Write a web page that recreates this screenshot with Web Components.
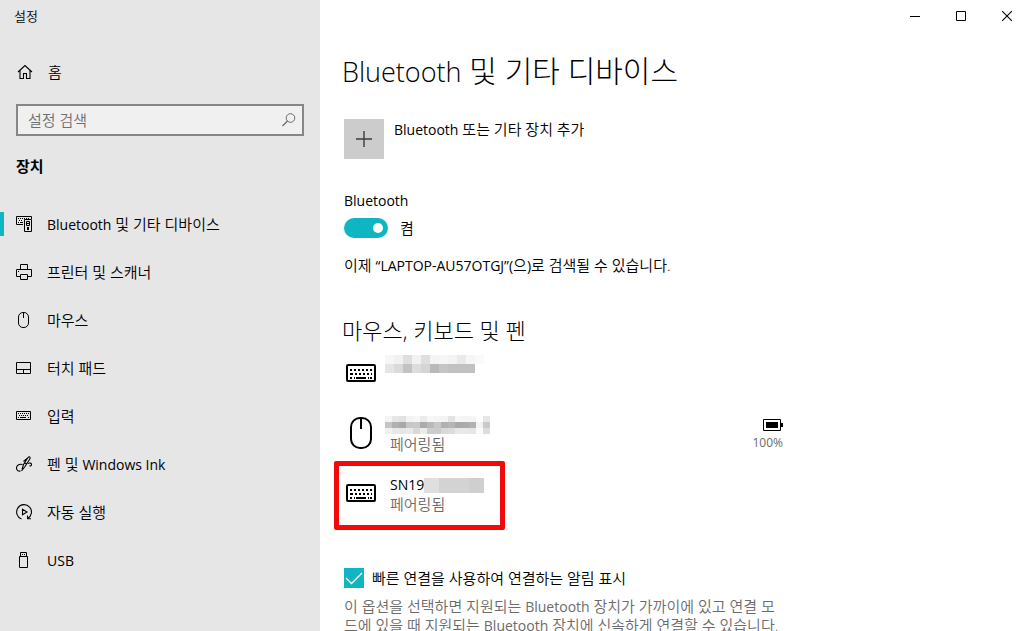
<!DOCTYPE html>
<html lang="ko">
<head>
<meta charset="utf-8">
<title>설정</title>
<style>
  body {
    margin: 0;
    overflow: hidden;
    background: #fff;
    color: #000;
    font: 350 15px/20px "Open Sans", "Noto Sans CJK KR", sans-serif;
    --accent: #0fb5c3;
    --muted: #6b6b6b;
    --latin: 14px;
  }
</style>
</head>
<body>
<settings-app></settings-app>

<script>
const define = (name, html, setup, observed = []) => {
  const template = document.createElement('template');
  template.innerHTML = html;
  customElements.define(name, class extends HTMLElement {
    static observedAttributes = observed;
    constructor() {
      super();
      this.attachShadow({ mode: 'open' }).append(template.content.cloneNode(true));
    }
    connectedCallback() {
      if (setup) setup(this, this.shadowRoot);
    }
    attributeChangedCallback() {
      if (setup) setup(this, this.shadowRoot);
    }
  });
};

const keys = (rows) => rows.map(([y, xs]) => xs.map(([x, w]) => `<rect x="${x}" y="${y}" width="${w}" height="2"/>`).join('')).join('');

const ICONS = {
  home: ['0 0 16 16', '<path d="M1 8 8 1.5 15 8M3 6.5V14.5H6.5V9.5H9.5V14.5H13V6.5" fill="none" stroke="currentColor" stroke-width="1.1"/>'],
  devices: ['0 0 16 16', '<path d="M7 8.5H.5V.5H15.5V3M8.5 3.5H15.5V15.5H8.5ZM10.5 5.5H13.5V9.5H10.5Z" fill="none" stroke="currentColor"/><path d="M2 2h1v1H2zM4 2h1v1H4zM6 2h1v1H6zM8 2h1v1H8zM10 2h1v1h-1zM12 2h1v1h-1zM3 4h1v1H3zM5 4h1v1H5zM2 6h1v1H2zM4 6h3v1H4zM11 7h2v1h-2zM11 11h2v3h-2z"/>'],
  printer: ['0 0 16 16', '<path d="M4.5 5.5V.5H11.5V5.5M4.5 12.5H.5V5.5H15.5V12.5H11.5M4.5 10.5H11.5V15.5H4.5Z" fill="none" stroke="currentColor"/><path d="M2 7h1v1H2z"/>'],
  mouse: ['0 0 16 16', '<rect x="2.5" y=".5" width="10" height="15" rx="4.5" fill="none" stroke="currentColor"/><path d="M7.5 1V6" stroke="currentColor"/>'],
  touchpad: ['0 0 16 16', '<path d="M.5 2.5H14.5V13.5H.5ZM.5 9.5H14.5M7.5 9.5V13.5" fill="none" stroke="currentColor"/>'],
  typing: ['0 0 16 16', '<path d="M.5 3.5H14.5V11.5H.5Z" fill="none" stroke="currentColor"/><path d="M2 5h1v1H2zM4 5h1v1H4zM6 5h1v1H6zM8 5h1v1H8zM10 5h1v1h-1zM12 5h1v1h-1zM3 7h1v1H3zM5 7h1v1H5zM7 7h1v1H7zM9 7h1v1H9zM11 7h1v1h-1zM2 9h1v1H2zM4 9h6v1H4zM12 9h1v1h-1z"/>'],
  ink: ['0 0 16 16', '<path d="M6 13.5 7.5 8.5 12 1.5Q13.5 0 14 1.5 14.300 2.500 13.500 3.500L9 10.500 5.500 15M9 7 10.500 8M11 2.500 7.500 5.500M6.500 8.500C3 7.500.5 9.500.5 12 .5 14.500 2.500 15.500 4.500 15M12 7.500C14 6.500 15.500 7.200 15.500 8.500 15.500 9.500 14.500 10.200 13.500 9.800" fill="none" stroke="currentColor" stroke-width="1.1"/>'],
  autoplay: ['0 0 16 16', '<path d="M5.500 15A7.400 7.400 0 1 1 11.500 14.600M6.500 5.200V10.800L11 8ZM11.500 11.500V14.700H15" fill="none" stroke="currentColor" stroke-width="1.1"/>'],
  usb: ['0 0 16 16', '<path d="M4.500 4.500V.5H10.500V4.500M3.500 4.500H11.500V15.500H3.500Z" fill="none" stroke="currentColor"/><path d="M6 2h1v1H6zM8 2h1v1H8z"/>'],
  search: ['0 0 16 16', '<circle cx="9.500" cy="6" r="4.300" fill="none" stroke="currentColor"/><path d="M6.500 9 1.500 14" stroke="currentColor" stroke-width="1.200"/>'],
  plus: ['0 0 16 16', '<path d="M8 0V16M0 8H16" stroke="currentColor" stroke-width="1.400"/>'],
  minimize: ['0 0 10 10', '<path d="M0 5.500H10" stroke="currentColor"/>'],
  maximize: ['0 0 10 10', '<path d="M.5.5H9.500V9.500H.5Z" fill="none" stroke="currentColor"/>'],
  close: ['0 0 10 10', '<path d="M0 0 10 10M10 0 0 10" stroke="currentColor" stroke-width="1.100"/>'],
  tick: ['0 0 20 20', '<path d="M2 10 7.500 15.500 18 5" fill="none" stroke="currentColor" stroke-width="1.300"/>'],
  keyboardLarge: ['0 0 32 32', '<rect x="2" y="8" width="28" height="16" rx="1" fill="none" stroke="currentColor" stroke-width="2"/>' +
    keys([[12, [[5, 2], [9, 2], [13, 2], [17, 2], [21, 2], [25, 2]]], [16, [[5, 3], [10, 2], [14, 2], [18, 2], [22, 2], [26, 1]]], [20, [[5, 2], [9, 1], [11, 10], [23, 1], [25, 2]]]])],
  mouseLarge: ['0 0 32 32', '<rect x="6" y="1" width="20" height="30" rx="9" fill="none" stroke="currentColor" stroke-width="2"/><path d="M16 1V12" stroke="currentColor" stroke-width="2"/>'],
  battery: ['0 0 20 12', '<path d="M.5.5H17.500V11.500H.5Z" fill="none" stroke="currentColor"/><path d="M3 3H15V9H3ZM18 4H20V8H18Z"/>']
};

define('ui-icon', `
  <style>:host { display: block; width: 16px; height: 16px; flex: none } svg { display: block; width: 100%; height: 100%; fill: currentColor }</style>
  <svg aria-hidden="true"></svg>`, (host, root) => {
  const icon = ICONS[host.getAttribute('name')];
  if (!icon) return;
  const svg = root.querySelector('svg');
  svg.setAttribute('viewBox', icon[0]);
  svg.innerHTML = icon[1];
}, ['name']);

/* Latin words run slightly smaller than the Hangul around them, and must not grow the line */
define('latin-text', `<style>:host { font-size: var(--latin); font-weight: var(--latin-weight, 400); line-height: 0 }</style><slot></slot>`);

/* A pixelated strip that hides a private name: rows of grey levels */
define('privacy-mosaic', `
  <style>:host { display: block; flex: none } svg { display: block }</style><svg role="img" aria-label="가려진 이름" shape-rendering="crispEdges"></svg>`, (host, root) => {
  const w = +host.getAttribute('cell-width'), h = +host.getAttribute('cell-height');
  const rows = host.getAttribute('levels').split('/').map(r => r.trim().split(' '));
  const svg = root.querySelector('svg');
  svg.setAttribute('width', w * rows[0].length);
  svg.setAttribute('height', h * rows.length);
  svg.innerHTML = rows.map((r, y) => r.map((c, x) => `<rect x="${x * w}" y="${y * h}" width="${w}" height="${h}" fill="#${c}${c}${c}"/>`).join('')).join('');
});

define('window-controls', `
  <style>
    :host { display: flex; justify-content: flex-end }
    button { display: grid; place-items: center; width: 46px; height: 32px; padding: 0; border: 0; background: none; color: #000 }
    button:hover { background: #e5e5e5 }
    ui-icon { width: 10px; height: 10px }
  </style>
  <button aria-label="최소화"><ui-icon name="minimize"></ui-icon></button>
  <button aria-label="최대화"><ui-icon name="maximize"></ui-icon></button>
  <button aria-label="닫기"><ui-icon name="close"></ui-icon></button>`);

define('nav-link', `
  <style>
    :host { display: block }
    a { display: flex; align-items: center; gap: 15px; height: 48px; padding-left: 16px; color: inherit; text-decoration: none; position: relative }
    :host([current]) a::before { content: ""; position: absolute; left: 0; top: 12px; width: 4px; height: 24px; background: var(--accent) }
  </style>
  <a href="#"><ui-icon></ui-icon><span><slot></slot></span></a>`, (host, root) => {
  root.querySelector('ui-icon').setAttribute('name', host.getAttribute('icon'));
  if (host.hasAttribute('current')) root.querySelector('a').setAttribute('aria-current', 'page');
});

define('search-box', `
  <style>
    :host { display: block }
    form { display: flex; align-items: center; box-sizing: border-box; height: 32px; padding: 0 5px 0 10px; border: 2px solid #868686; background: #f0f0f0; color: var(--muted) }
    input { flex: 1; min-width: 0; padding: 0; border: 0; outline: 0; background: none; font: inherit; color: #000 }
    input::placeholder { color: #6e6e6e; opacity: 1 }
    button { padding: 0; border: 0; background: none; color: inherit }
  </style>
  <form role="search"><input type="text" aria-label="설정 검색" placeholder="설정 검색"><button type="button" aria-label="검색"><ui-icon name="search"></ui-icon></button></form>`);

define('settings-sidebar', `
  <style>
    :host { display: block; width: 320px; flex: none; background: #e6e6e6 }
    .caption { height: 32px; padding-left: 14px; font-size: 13px; line-height: 32px }
    .home { display: block; margin: 16px 0 8px 1px }
    search-box { margin: 0 16px }
    h2 { margin: 20px 16px 24px; font-size: 15px; line-height: 20px; font-weight: 700 }
  </style>
  <div class="caption">설정</div>
  <nav-link class="home" icon="home">홈</nav-link>
  <search-box></search-box>
  <h2>장치</h2>
  <nav>
    <nav-link icon="devices" current><latin-text>Bluetooth</latin-text> 및 기타 디바이스</nav-link>
    <nav-link icon="printer">프린터 및 스캐너</nav-link>
    <nav-link icon="mouse">마우스</nav-link>
    <nav-link icon="touchpad">터치 패드</nav-link>
    <nav-link icon="typing">입력</nav-link>
    <nav-link icon="ink">펜 및 <latin-text>Windows Ink</latin-text></nav-link>
    <nav-link icon="autoplay">자동 실행</nav-link>
    <nav-link icon="usb"><latin-text>USB</latin-text></nav-link>
  </nav>`);

define('add-device', `
  <style>
    :host { display: block }
    button { display: flex; gap: 10px; padding: 0; border: 0; background: none; font: inherit; color: inherit; text-align: left }
    .tile { display: grid; place-items: center; width: 40px; height: 40px; background: #ccc; color: #3c3c3c }
  </style>
  <button><span class="tile"><ui-icon name="plus"></ui-icon></span><span><slot></slot></span></button>`);

define('toggle-switch', `
  <style>
    :host { display: block }
    .name { display: block; margin-bottom: 8px }
    .row { display: flex; align-items: center; gap: 12px; height: 20px }
    input { appearance: none; display: flex; align-items: center; box-sizing: border-box; width: 44px; height: 20px; margin: 0; padding: 0 5px; border-radius: 10px; background: #999 }
    input::before { content: ""; width: 10px; height: 10px; border-radius: 50%; background: #fff }
    input:checked { justify-content: flex-end; background: var(--accent) }
  </style>
  <label class="name" for="switch"><slot></slot></label>
  <div class="row"><input id="switch" type="checkbox" role="switch" checked><span>켬</span></div>`);

define('device-row', `
  <style>
    :host { display: grid; grid-template-columns: 34px 1fr auto; column-gap: 12px; align-items: center; height: 60px; position: relative }
    ui-icon { width: 32px; height: 32px; margin-left: 1px }
    .text { align-self: start; padding-top: 12px }
    .status { display: block; line-height: 19px; color: var(--muted) }
    :host([highlight])::after { content: ""; position: absolute; left: -10px; top: -2px; width: 161px; height: 59px; border: 5px solid #f20a0a; border-radius: 2px }
  </style>
  <ui-icon></ui-icon>
  <div class="text"><slot></slot><span class="status"><slot name="status"></slot></span></div>
  <slot name="end"></slot>`, (host, root) => {
  root.querySelector('ui-icon').setAttribute('name', host.getAttribute('icon'));
});

define('battery-level', `
  <style>
    :host { display: flex; flex-direction: column; align-items: flex-end; align-self: start; gap: 2px; margin-top: 16px; font-size: 12px; line-height: 20px; color: var(--muted) }
    ui-icon { width: 20px; height: 12px; color: #000 }
    span { font-weight: 400 }
  </style>
  <ui-icon name="battery"></ui-icon><span><slot></slot></span>`);

define('check-option', `
  <style>
    :host { display: block }
    label { display: flex; gap: 8px }
    .box { display: grid; width: 20px; height: 20px; color: #fff }
    input, ui-icon { grid-area: 1 / 1; width: 20px; height: 20px; margin: 0 }
    input { appearance: none; box-sizing: border-box; border: 2px solid #333 }
    input:checked { border: 0; background: var(--accent) }
    ui-icon { z-index: 1; pointer-events: none }
  </style>
  <label><span class="box"><input type="checkbox" checked><ui-icon name="tick"></ui-icon></span><span><slot></slot></span></label>`);

define('bluetooth-page', `
  <style>
    :host { display: block; flex: 1; min-width: 0 }
    main { padding: 0 24px }
    section { max-width: 439px }
    h1 { margin: 19px 0 28px -2px; font-size: 30px; line-height: 40px; font-weight: 300; --latin: 27px; --latin-weight: 350 }
    add-device { margin-bottom: 31px }
    .found { margin: 17px 0 42px }
    h2 { margin: 0 0 0 -2px; font-size: 22px; line-height: 26px; font-weight: 300 }
    .name { display: flex; align-items: center; height: 20px }
    .shifted { margin-left: -5px }
    check-option { margin: 45px 0 9px }
    .hint { margin: 0; line-height: 19px; color: var(--muted) }
  </style>
  <window-controls></window-controls>
  <main>
    <h1><latin-text>Bluetooth</latin-text> 및 기타 디바이스</h1>
    <add-device><latin-text>Bluetooth</latin-text> 또는 기타 장치 추가</add-device>
    <toggle-switch><latin-text>Bluetooth</latin-text></toggle-switch>
    <p class="found">이제 <latin-text>“LAPTOP-AU57OTGJ”(</latin-text>으<latin-text>)</latin-text>로 검색될 수 있습니다.</p>
    <section>
      <h2>마우스, 키보드 및 펜</h2>
      <device-row icon="keyboardLarge">
        <privacy-mosaic class="shifted" cell-width="9" cell-height="9" levels="f6 f1 df f2 df f4 f6 f3 ea f6 fa/e5 da c3 dd d5 b9 c5 c1 c1 c1 ff"></privacy-mosaic>
      </device-row>
      <device-row icon="mouseLarge">
        <div class="name"><privacy-mosaic class="shifted" cell-width="7" cell-height="6" levels="f4 e6 e2 f3 f7 eb f7 f4 f4 e3 f7 f5 f4 ff e7/c5 b1 a9 c7 c9 ab b9 c8 b1 b5 a9 ab b1 f3 c9/f0 e8 e6 e9 d9 ec cd cb d9 dc e8 e8 e6 fa dd"></privacy-mosaic></div>
        <span slot="status">페어링됨</span>
        <battery-level slot="end">100%</battery-level>
      </device-row>
      <device-row icon="keyboardLarge" highlight>
        <div class="name"><latin-text>SN19</latin-text><privacy-mosaic cell-width="15" cell-height="15" levels="df d3 d3 cf"></privacy-mosaic></div>
        <span slot="status">페어링됨</span>
      </device-row>
      <check-option>빠른 연결을 사용하여 연결하는 알림 표시</check-option>
      <p class="hint">이 옵션을 선택하면 지원되는 <latin-text>Bluetooth</latin-text> 장치가 가까이에 있고 연결 모드에 있을 때 지원되는 <latin-text>Bluetooth</latin-text> 장치에 신속하게 연결할 수 있습니다.</p>
    </section>
  </main>`);

define('settings-app', `
  <style>:host { display: flex; min-height: 100vh }</style>
  <settings-sidebar></settings-sidebar>
  <bluetooth-page></bluetooth-page>`);
</script>
</body>
</html>
